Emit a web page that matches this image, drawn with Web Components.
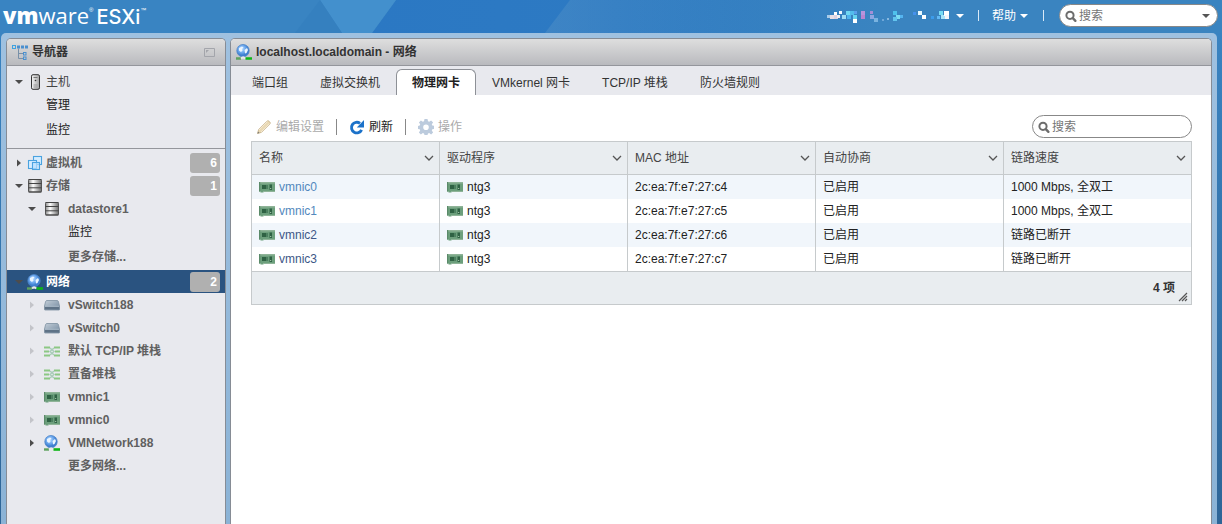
<!DOCTYPE html>
<html lang="zh-CN">
<head>
<meta charset="utf-8">
<title>VMware ESXi</title>
<style>
  html { height: 100%; }
  body {
    margin: 0; min-height: 100%; overflow: hidden; display: flex;
    font: 12px/16px "Liberation Sans", "Noto Sans CJK SC", sans-serif; color: #333;
  }
  esxi-app { flex: 1; min-width: 0; }
</style>
</head>
<body>
<esxi-app>
  <esxi-header slot="header"></esxi-header>
  <ui-panel slot="nav" heading="导航器" icon="tree" collapsible>
    <nav-group divided>
      <nav-item icon="host" toggle="open" plain>主机</nav-item>
      <nav-item plain dark>管理</nav-item>
      <nav-item plain dark tall>监控</nav-item>
    </nav-group>
    <nav-group>
      <nav-item icon="vm" toggle="closed" badge="6">虚拟机</nav-item>
      <nav-item icon="disk" toggle="open" badge="1">存储</nav-item>
      <nav-item icon="disk" toggle="open" level="1">datastore1</nav-item>
      <nav-item level="1" plain dark>监控</nav-item>
      <nav-item level="1" tall>更多存储...</nav-item>
      <nav-item icon="globe" toggle="open" badge="2" selected>网络</nav-item>
      <nav-item icon="switch" toggle="dim" level="1">vSwitch188</nav-item>
      <nav-item icon="switch" toggle="dim" level="1">vSwitch0</nav-item>
      <nav-item icon="stack" toggle="dim" level="1">默认 TCP/IP 堆栈</nav-item>
      <nav-item icon="stack" toggle="dim" level="1">置备堆栈</nav-item>
      <nav-item icon="nic" toggle="dim" level="1">vmnic1</nav-item>
      <nav-item icon="nic" toggle="dim" level="1">vmnic0</nav-item>
      <nav-item icon="globe" toggle="closed" level="1">VMNetwork188</nav-item>
      <nav-item level="1">更多网络...</nav-item>
    </nav-group>
  </ui-panel>
  <ui-panel slot="main" heading="localhost.localdomain - 网络" icon="globe" light>
    <tab-bar>
      <tab-item>端口组</tab-item>
      <tab-item>虚拟交换机</tab-item>
      <tab-item selected>物理网卡</tab-item>
      <tab-item>VMkernel 网卡</tab-item>
      <tab-item>TCP/IP 堆栈</tab-item>
      <tab-item>防火墙规则</tab-item>
    </tab-bar>
    <nic-view></nic-view>
  </ui-panel>
</esxi-app>

<script>
const ICONS = {
  tree: '<g fill="none" stroke="#4a90cf" stroke-width="1"><rect x=".5" y="1.500" width="3" height="3" stroke="#3fa3e0"/><rect x="5.500" y="2" width="2" height="2"/><rect x="9.500" y="2" width="2" height="2"/><rect x="13.500" y="2" width="2" height="2"/><rect x="11.500" y="8.500" width="2.500" height="2.500"/><rect x="11.500" y="13" width="2.500" height="2.500"/></g><path d="M6.500 4.500v10H11M6.500 9.500H11" fill="none" stroke="#7890a8"/>',
  host: '<defs><linearGradient id="a" x2="1"><stop stop-color="#f4f4f4"/><stop offset="1" stop-color="#a6a6a6"/></linearGradient></defs><rect x="4.500" y=".7" width="8" height="14.600" rx="1.500" fill="url(#a)" stroke="#333"/><path d="M6.500 3.500h4" stroke="#777"/><path d="M6.500 11h4M6.500 13h4" stroke="#999"/><circle cx="8.500" cy="6.500" r=".8" fill="#333"/>',
  vm: '<g fill="#d5edff" stroke="#4aa3e0" stroke-width="1.100"><rect x="6.500" y="1.500" width="8" height="8"/><rect x="1.500" y="5.500" width="8" height="8"/><rect x="5.500" y="7.500" width="7" height="7" fill="#b9dfff" fill-opacity=".7"/></g>',
  disk: '<defs><linearGradient id="a" x2="1"><stop stop-color="#8a8a8a"/><stop offset=".35" stop-color="#fff"/><stop offset="1" stop-color="#6e6e6e"/></linearGradient></defs><rect x="1.500" y="1.500" width="13" height="12.500" rx="1" fill="url(#a)" stroke="#555"/><path d="M1.500 5.500h13M1.500 9.800h13" stroke="#444"/><path d="M1.500 1.500h13M1.500 14h13" stroke="#444"/>',
  globe: '<defs><radialGradient id="a" cx=".4" cy=".35"><stop stop-color="#bcdcff"/><stop offset=".6" stop-color="#6ea9ee"/><stop offset="1" stop-color="#3f7fd0"/></radialGradient></defs><circle cx="7" cy="6.700" r="6.200" fill="url(#a)" stroke="#4b84c8" stroke-width=".8"/><path d="M3 4 6 2.500l1.500 1-1.500 1.500.5 1.500-1.500 1.500L3 6.500zM8.500 6l2.500-2 1 2-1.500 3-1.500.5z" fill="#eaf5ff"/><path d="M0 14.500h5" stroke="#5da25d" stroke-width="2.400"/><path d="M5 14.500q2-2.500 4.500 0" fill="#eee" stroke="#e8e8e8" stroke-width="1.800"/><path d="M9.500 14.500H16" stroke="#0eb516" stroke-width="2.600"/>',
  switch: '<defs><linearGradient id="a" x2="1" y2="1"><stop stop-color="#c3ced8"/><stop offset="1" stop-color="#71879d"/></linearGradient></defs><path d="M3 3.500h10q1 0 1.400 1L15.500 9v3.500q0 .5-.5.500H1q-.5 0-.5-.5V9l1.100-4.500q.4-1 1.400-1z" fill="url(#a)" stroke="#7e90a1" stroke-width=".8"/><path d="M.8 9.500h14.400v3H.8z" fill="#5f7387"/><path d="M1 9.300h14" stroke="#b9c7d3" stroke-width=".8"/>',
  stack: '<path d="M0 4.500h6M10 4.500h6M0 8.500h5M11 8.500h5M0 12.500h6M10 12.500h6" stroke="#8cc884" stroke-width="2"/><path d="M6 5 10 8.500 6 12M10 5 6 8.500 10 12" fill="none" stroke="#a9cdb8" stroke-width="1.400"/>',
  nic: '<path d="M0 3h16v9.500H4.500v1h-3v-1H0z" fill="#6c9f7c"/><path d="M0 3h16v1.500H0z" fill="#8fb498"/><path d="M0 3h1.200v9.500H0z" fill="#5a8a69"/><path d="M3 6h4.500v4H3zM10.500 5.500H13V11h-2.500z" fill="#2f6244"/><path d="M8.500 6v4" stroke="#4b8060"/><path d="M11.200 9.500h1" stroke="#b6d3b7"/><path d="M5 12.500h11" stroke="#8fb498"/>',
  pencil: '<path d="m1.500 14.500 1.200-4L11 2.200q1-1 2 0l.8.800q1 1 0 2L5.500 13.300z" fill="#ead9b4" stroke="#c9b48c" stroke-width=".9"/><path d="m3 11 8.500-8.500M5 13l8.500-8.500" stroke="#f6eedb" stroke-width=".8"/><path d="m1.500 14.500.6-2 1.400 1.400z" fill="#777"/>',
  refresh: '<path d="M12.600 10.800A5.300 5.300 0 1 1 11 4.300" fill="none" stroke="#1c72c9" stroke-width="2.900"/><path d="M15 1v7.500H7.800z" fill="#1c72c9"/>',
  gear: '<path fill="#bccbdd" fill-rule="evenodd" d="M6.500 0h3l.5 2.200 1.200.5L13.100 1.400l2 2-1.300 1.900.5 1.200 2 .4v3l-2 .4-.5 1.200 1.300 1.900-2 2-1.900-1.300-1.200.5L9.500 16h-3L6 14.600l-1.200-.5-1.900 1.300-2-2 1.300-1.900-.5-1.200L0 9.900v-3l1.700-.4.5-1.200L.9 3.400l2-2 1.900 1.300L6 2.200zM8 5.400a2.800 2.800 0 1 0 0 5.600 2.800 2.800 0 0 0 0-5.600z"/>',
  search: '<circle cx="7" cy="7.300" r="3.600" fill="none" stroke="#6d6d6d" stroke-width="2"/><path d="m9.800 10.200 2.600 2.600" stroke="#6d6d6d" stroke-width="2.400" stroke-linecap="round"/>',
  down: '<path d="M4 6h8l-4 4z" fill="currentColor"/>',
  right: '<path d="M6 4.500v7L10 8z" fill="currentColor"/>',
  chevron: '<path d="m4 6 4 4 4-4" fill="none" stroke="#555" stroke-width="1.300"/>',
  dock: '<path d="M3.500 4.500h10v8h-10z" fill="none" stroke="#a3a5ab"/><path d="M5 6h3L5 9z" fill="#a3a5ab"/>',
  grip: '<path d="m4 13 8-8M7 13l5-5M10 13l2-2" stroke="#555" stroke-width="1.200"/>'
};

class Base extends HTMLElement {
  constructor() { super(); this.attachShadow({ mode: 'open' }); }
  connectedCallback() {
    this.shadowRoot.innerHTML = `<style>:host,*{box-sizing:border-box}button,input{font:inherit;color:inherit;background:none;border:0;margin:0;padding:0}a{color:inherit;text-decoration:none}${this.css()}</style>${this.html()}`;
  }
  get(name) { return this.getAttribute(name) || ''; }
}

customElements.define('ui-icon', class extends Base {
  css() { return ':host{display:block;flex:none;width:16px;height:16px}svg{display:block}'; }
  html() { return `<svg width="16" height="16" viewBox="0 0 16 16" aria-hidden="true">${ICONS[this.get('name')]}</svg>`; }
});

customElements.define('search-box', class extends Base {
  css() { return `
    :host{display:block;width:160px}
    label{display:flex;align-items:center;height:23px;padding:0 3px;border:1px solid #888;border-radius:12px;background:#fff;color:#555}
    input{flex:1;min-width:0;outline:0}
    input::placeholder{color:#757575;opacity:1}`; }
  html() { return `<label><ui-icon name="search"></ui-icon><input type="text" placeholder="搜索" aria-label="搜索">${this.hasAttribute('menu') ? '<ui-icon name="down"></ui-icon>' : ''}</label>`; }
});

customElements.define('esxi-header', class extends Base {
  css() { return `
    :host{display:flex;align-items:center;justify-content:space-between;height:33px;padding:0 4px 2px 3px;color:#fff}
    .logo{display:flex;align-items:baseline;font:400 22px/30px "Open Sans","Noto Sans",sans-serif}
    .logo b{font-weight:800}
    .logo span{margin-left:3px;font:500 20px/30px Inter,sans-serif}
    .logo small{align-self:flex-start;font:6px/20px "Liberation Sans",sans-serif}
    .tools{display:flex;align-items:center}
    button{display:flex;align-items:center;height:20px}
    i{width:1px;height:11px;background:#d9e9f7}
    i:first-of-type{margin:0 13px 0 10px}
    i:last-of-type{margin:0 15px 0 11px}
    search-box{width:159px}`; }
  html() {
    const px = [[2,8,3,'#a9cbe8'],[5,8,4,'#e8dfe6'],[9,5,3,'#fff'],[9,8,4,'#dcd3e2'],[14,4,3,'#f4f9ff'],[12,8,3,'#f0f0f4'],[17,8,4,'#9edcf4'],[21,4,4,'#6fd7f2'],[25,4,4,'#53bdec'],[29,4,3,'#5aa0ec'],[22,8,4,'#4fb4ee'],[28,12,4,'#fff'],[28,8,4,'#67d3ef'],[36,4,4,'#b594dc'],[36,8,4,'#b884cf'],[45,4,3,'#a58ed6'],[45,8,4,'#8da6e2'],[49,11,4,'#79b3e0'],[57,12,2,'#6fa7d8'],[62,11,2,'#87b8df'],[68,4,4,'#4fc1ec'],[71,8,4,'#7cdcf2'],[68,10,4,'#62c4ee'],[75,8,3,'#54b4f0'],[88,5,3,'#4591ec'],[93,4,4,'#eafaff'],[97,8,4,'#fff'],[106,9,3,'#3b9bea'],[112,9,3,'#62b8f4'],[114,4,4,'#76dcf4'],[116,8,4,'#a8e5f8'],[119,4,5,'#fff'],[120,8,4,'#f4f4fa']];
    return `<div class="logo"><b>vm</b>ware<small>®</small><span>ESXi</span><small>™</small></div>
    <div class="tools">
      <button aria-label="账户"><svg width="127" height="18" viewBox="0 0 127 18" aria-hidden="true">${px.map(([x,y,s,c]) => `<rect x="${x}" y="${y}" width="${s}" height="${s}" fill="${c}"/>`).join('')}</svg><ui-icon name="down"></ui-icon></button>
      <i></i><button>帮助<ui-icon name="down"></ui-icon></button><i></i>
      <search-box menu></search-box>
    </div>`;
  }
});

customElements.define('esxi-app', class extends Base {
  css() { return `
    :host{display:flex;flex-direction:column;background:linear-gradient(#3983c1 33px,#2e6597)}
    .top{position:relative;background:#3984c2}
    .top svg{position:absolute;inset:0;width:100%;height:100%}
    .top ::slotted(*){position:relative}
    .frame{flex:1;display:grid;grid-template-columns:220px minmax(0,1fr);gap:4px;margin:0 5px 0 1px;padding:5px 5px 0;border-radius:5px 5px 0 0;background:linear-gradient(#9fc1e0,#8bb3d6)}`; }
  html() { return `<header class="top"><svg viewBox="0 0 1222 33" preserveAspectRatio="none" aria-hidden="true">
      <defs><linearGradient id="f"><stop stop-color="#2b78c3"/><stop offset=".3" stop-color="#2d7ac3"/><stop offset=".6" stop-color="#3a84c0"/></linearGradient><linearGradient id="g"><stop stop-color="#5a96c8" stop-opacity=".4"/><stop offset="1" stop-color="#3a84c0" stop-opacity="0"/></linearGradient></defs>
      <path d="M396 0H1222V33H372z" fill="url(#f)"/><path d="M570 0h250v33H545z" fill="url(#g)"/><path d="M320 0h76l-24 33h-30z" fill="#4390cd"/><path d="M320 0 295 33h47z" fill="#3580bf"/></svg><slot name="header"></slot></header>
    <div class="frame"><slot name="nav"></slot><slot name="main"></slot></div>`; }
});

customElements.define('ui-panel', class extends Base {
  css() { return `
    :host{display:flex;flex-direction:column;min-width:0;border:1px solid #868c95;border-bottom:0;border-radius:5px 5px 0 0;background:#e8e9ee;overflow:hidden}
    :host([light]){background:#fff}
    h2{display:flex;align-items:center;gap:4px;height:27px;margin:0;padding:0 8px 0 5px;border-bottom:1px solid #94969c;background:linear-gradient(#dedede,#b9babe);font:inherit;font-weight:bold;color:#333}
    h2 button{margin-left:auto}`; }
  html() { return `<h2><ui-icon name="${this.get('icon')}"></ui-icon>${this.get('heading')}${this.hasAttribute('collapsible') ? '<button aria-label="折叠"><ui-icon name="dock"></ui-icon></button>' : ''}</h2><slot></slot>`; }
});

customElements.define('nav-group', class extends Base {
  css() { return ':host{display:block;padding-top:2px}:host([divided]){padding:4px 0 5px;border-bottom:1px solid #94969c}'; }
  html() { return '<slot></slot>'; }
});

customElements.define('nav-item', class extends Base {
  css() { return `
    :host{display:flex;align-items:center;height:23px;padding:0 5px 0 4px;font-weight:bold;color:#606060}
    :host([level]){padding-left:17px}
    :host([plain]){font-weight:normal;color:#444}
    :host([dark]){color:#222}
    :host([tall]){height:27px}
    :host([selected]){background:#2a5380;color:#fff}
    button,.gap{flex:none;width:16px;height:16px;color:#4c4c4c}
    button.dim{color:#c3c4c9}
    .kind,.blank{flex:none;width:16px;margin-right:3px}
    :host([level]) .kind,:host([level]) .blank{margin:0 8px 0 4px}
    a{flex:1;white-space:nowrap}
    .badge{width:30px;height:20px;padding:0 3px;border-radius:3px;background:#b0b0b0;color:#fff;font-weight:bold;line-height:20px;text-align:right}`; }
  html() {
    const t = this.get('toggle'), icon = this.get('icon'), badge = this.get('badge');
    return `${t ? `<button class="${t}" aria-label="展开或折叠"><ui-icon name="${t === 'open' ? 'down' : 'right'}"></ui-icon></button>` : '<span class="gap"></span>'}
    ${icon ? `<ui-icon class="kind" name="${icon}"></ui-icon>` : '<span class="blank"></span>'}<a href="#"><slot></slot></a>${badge ? `<span class="badge">${badge}</span>` : ''}`;
  }
});

customElements.define('tab-bar', class extends Base {
  css() { return ':host{display:flex;align-items:flex-end;height:29px;padding:0 5px;background:#e8e9ee}'; }
  html() { return '<slot></slot>'; }
});

customElements.define('tab-item', class extends Base {
  css() { return `
    button{display:block;height:26px;padding:0 15px;border:1px solid transparent;border-bottom:0;white-space:nowrap;color:#333}
    :host([selected]) button{border-color:#8d9096;border-radius:6px 6px 0 0;background:#fff;color:#222;font-weight:bold}`; }
  html() { return '<button><slot></slot></button>'; }
});

customElements.define('nic-view', class extends Base {
  css() { return `
    :host{display:block;padding:0 19px 20px 20px}
    .bar{display:flex;align-items:center;justify-content:space-between;padding:20px 0 3px}
    .actions{display:flex;align-items:center}
    .actions button{display:flex;align-items:center;gap:4px;height:16px;padding:0 12px;border-left:1px solid #888;color:#222}
    .actions button:first-child{border:0;padding-left:5px}
    .actions button:disabled{color:#aaa}
    table{width:100%;table-layout:fixed;border-collapse:separate;border-spacing:0;border:1px solid #c6cacc;border-right:0}
    th,td{padding:0 7px;border-right:1px solid #c6cacc;text-align:left;font-weight:normal;white-space:nowrap}
    th{height:33px;padding-right:2px;border-bottom:1px solid #c6cacc;background:#e9edf0;color:#444}
    tbody td{height:24px;color:#222}
    tbody tr:nth-child(odd){background:#f1f6fb}
    th div,td div{display:flex;align-items:center;gap:4px}
    th div{justify-content:space-between}
    a{color:#5288bd}
    .down a{color:#3d5787}
    tfoot td{height:33px;padding:0 0 0 8px;border-top:1px solid #c6cacc;background:#e9edf0;font-weight:bold;color:#333}
    tfoot div{justify-content:flex-end;gap:0}
    tfoot ui-icon{align-self:flex-end;margin-top:16px}`; }
  html() {
    const rows = ['c4','c5','c6','c7'].map((m, i) => `<tr class="${i > 1 ? 'down' : 'up'}"><td><div><ui-icon name="nic"></ui-icon><a href="#">vmnic${i}</a></div></td><td><div><ui-icon name="nic"></ui-icon>ntg3</div></td><td>2c:ea:7f:e7:27:${m}</td><td>已启用</td><td>${i > 1 ? '链路已断开' : '1000 Mbps, 全双工'}</td></tr>`).join('');
    return `<div class="bar"><div class="actions">
        <button disabled><ui-icon name="pencil"></ui-icon>编辑设置</button>
        <button><ui-icon name="refresh"></ui-icon>刷新</button>
        <button disabled><ui-icon name="gear"></ui-icon>操作</button></div>
      <search-box></search-box></div>
    <table><thead><tr>${['名称','驱动程序','MAC 地址','自动协商','链路速度'].map(h => `<th scope="col"><div>${h}<ui-icon name="chevron"></ui-icon></div></th>`).join('')}</tr></thead>
      <tbody>${rows}</tbody>
      <tfoot><tr><td colspan="5"><div><span>4 项</span><ui-icon name="grip"></ui-icon></div></td></tr></tfoot></table>`;
  }
});
</script>
</body>
</html>
